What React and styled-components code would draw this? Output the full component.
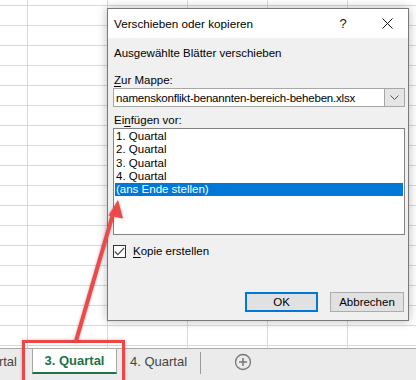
import React from "react";
import styled, { createGlobalStyle } from "styled-components";

const GlobalStyle = createGlobalStyle`
  html, body { margin: 0; padding: 0; background: #fff; }
  body { font-family: "Liberation Sans", Arial, sans-serif; }
  * { box-sizing: border-box; }
`;

const Screen = styled.div`
  position: relative;
  width: 416px;
  height: 380px;
  overflow: hidden;
  display: flex;
  flex-direction: column;
  background: #fff;
`;

const Grid = styled.div`
  flex: 1;
  background-color: #fff;
  background-image:
    linear-gradient(to right, #d9d9d9 1px, transparent 1px),
    linear-gradient(to bottom, #d9d9d9 1px, transparent 1px);
  background-size: 80px 20px;
  background-position: 27px 5px;
`;

const TabBar = styled.div`
  height: 32px;
  flex: none;
  border-top: 1px solid #ababab;
  background: #ebebeb;
  display: flex;
  align-items: flex-start;
  font-size: 13px;
  color: #444;
`;

const CutTab = styled.div`
  width: 32px;
  height: 25px;
  overflow: hidden;
  display: flex;
  justify-content: flex-end;
  align-items: center;
  padding-right: 15px;
  white-space: nowrap;
`;

const ActiveTab = styled.div`
  width: 85px;
  height: 25px;
  background: #fff;
  border-left: 1px solid #a8a8a8;
  border-right: 1px solid #a8a8a8;
  border-bottom: 2px solid #217346;
  display: flex;
  justify-content: center;
  align-items: center;
  font-weight: bold;
  color: #217346;
  white-space: nowrap;
`;

const Tab = styled.div`
  height: 25px;
  padding: 0 13px;
  display: flex;
  align-items: center;
  white-space: nowrap;
`;

const TabSeparator = styled.div`
  width: 1px;
  height: 22px;
  margin-top: 3px;
  background: #9a9a9a;
`;

const AddSheet = styled.div`
  margin-left: 33px;
  height: 25px;
  display: flex;
  align-items: center;
`;

const Dialog = styled.div`
  position: absolute;
  left: 107px;
  top: 8px;
  width: 302px;
  height: 313px;
  border: 1px solid #7a7a7a;
  background: #f0f0f0;
  box-shadow: 0 0 9px rgba(0, 0, 0, 0.28);
  display: flex;
  flex-direction: column;
  font-size: 11.5px;
  color: #000;
`;

const TitleBar = styled.div`
  height: 29px;
  flex: none;
  background: #fff;
  display: flex;
  align-items: center;
`;

const Title = styled.div`
  flex: 1;
  padding-left: 6px;
  font-size: 11.7px;
`;

const TitleButton = styled.div`
  width: ${(p) => p.$w}px;
  height: 29px;
  display: flex;
  align-items: center;
  justify-content: center;
  font-size: 13px;
  color: #111;
`;

const Body = styled.div`
  flex: 1;
  display: flex;
  flex-direction: column;
  padding: 0 3px 0 5px;
`;

const Label = styled.div`
  line-height: 16px;
  padding-left: 1px;
  margin-top: ${(p) => p.$mt}px;
  white-space: nowrap;
`;

const Key = styled.span`
  text-decoration: underline;
  text-underline-offset: 2px;
`;

const Combo = styled.div`
  height: 19px;
  display: flex;
  border: 1px solid #a6a6a6;
  background: #fff;
`;

const ComboText = styled.div`
  flex: 1;
  display: flex;
  align-items: center;
  padding-left: 2px;
  letter-spacing: -0.2px;
  white-space: nowrap;
  overflow: hidden;
`;

const ComboButton = styled.div`
  width: 20px;
  border-left: 1px solid #a6a6a6;
  background: #e5e5e5;
  display: flex;
  align-items: center;
  justify-content: center;
`;

const ListBox = styled.div`
  height: 107px;
  border: 1px solid #828282;
  background: #fff;
  padding: 1px;
`;

const ListItem = styled.div`
  height: 13.3px;
  line-height: 13.3px;
  padding-left: 1px;
  white-space: nowrap;
  background: ${(p) => (p.$selected ? "#0078d7" : "transparent")};
  color: ${(p) => (p.$selected ? "#fff" : "#000")};
`;

const CheckRow = styled.div`
  margin-top: 8px;
  height: 16px;
  display: flex;
  align-items: center;
  gap: 7px;
`;

const CheckBox = styled.div`
  width: 13px;
  height: 13px;
  border: 1px solid #333;
  background: #fff;
  display: flex;
  align-items: center;
  justify-content: center;
`;

const ButtonRow = styled.div`
  margin-top: 33px;
  display: flex;
  justify-content: flex-end;
  gap: 12px;
  padding-right: 1px;
`;

const Button = styled.div`
  width: ${(p) => p.$w}px;
  height: 20px;
  background: #e1e1e1;
  border: ${(p) => (p.$default ? "2px solid #0078d7" : "1px solid #adadad")};
  display: flex;
  align-items: center;
  justify-content: center;
`;

const RedBox = styled.div`
  position: absolute;
  left: 22px;
  top: 340px;
  width: 103px;
  height: 44px;
  border: 3px solid #ec4646;
  box-shadow: 0 0 3px rgba(0, 0, 0, 0.25);
`;

const ArrowSvg = styled.svg`
  position: absolute;
  left: 0;
  top: 0;
  overflow: visible;
  filter: drop-shadow(0 0 1.5px rgba(0, 0, 0, 0.3));
`;

export default function App() {
  return (
    <>
      <GlobalStyle />
      <Screen>
        <Grid />
        <TabBar>
          <CutTab>2. Quartal</CutTab>
          <ActiveTab>3. Quartal</ActiveTab>
          <Tab>4. Quartal</Tab>
          <TabSeparator />
          <AddSheet>
            <svg width="18" height="18" viewBox="0 0 18 18">
              <circle cx="9" cy="9" r="7.5" fill="none" stroke="#777" strokeWidth="1.3" />
              <path d="M9 5v8M5 9h8" stroke="#777" strokeWidth="1.5" />
            </svg>
          </AddSheet>
        </TabBar>

        <Dialog>
          <TitleBar>
            <Title>Verschieben oder kopieren</Title>
            <TitleButton $w={46}>?</TitleButton>
            <TitleButton $w={42}>
              <svg width="11" height="11" viewBox="0 0 11 11">
                <path d="M0.5 0.5L10.5 10.5M10.5 0.5L0.5 10.5" stroke="#111" strokeWidth="1" />
              </svg>
            </TitleButton>
          </TitleBar>
          <Body>
            <Label $mt={7}>Ausgewählte Blätter verschieben</Label>
            <Label $mt={11}>
              <Key>Z</Key>ur Mappe:
            </Label>
            <Combo>
              <ComboText>namenskonflikt-benannten-bereich-beheben.xlsx</ComboText>
              <ComboButton>
                <svg width="9" height="5" viewBox="0 0 9 5">
                  <path d="M0.5 0.5L4.5 4.5L8.5 0.5" fill="none" stroke="#555" strokeWidth="1" />
                </svg>
              </ComboButton>
            </Combo>
            <Label $mt={5}>
              Ei<Key>n</Key>fügen vor:
            </Label>
            <ListBox>
              <ListItem>1. Quartal</ListItem>
              <ListItem>2. Quartal</ListItem>
              <ListItem>3. Quartal</ListItem>
              <ListItem>4. Quartal</ListItem>
              <ListItem $selected>(ans Ende stellen)</ListItem>
            </ListBox>
            <CheckRow>
              <CheckBox>
                <svg width="11" height="9" viewBox="0 0 11 9">
                  <path d="M0.8 4.5L3.8 7.6L10.2 0.8" fill="none" stroke="#444" strokeWidth="1.2" />
                </svg>
              </CheckBox>
              <span>
                <Key>K</Key>opie erstellen
              </span>
            </CheckRow>
            <ButtonRow>
              <Button $w={73} $default>OK</Button>
              <Button $w={74}>Abbrechen</Button>
            </ButtonRow>
          </Body>
        </Dialog>

        <RedBox />
        <ArrowSvg width="416" height="380" viewBox="0 0 416 380">
          <path d="M76 341L113 214" stroke="#ef4848" strokeWidth="4" strokeLinecap="round" />
          <path d="M118 200L108.5 215.5L123 218.5Z" fill="#ef4848" />
        </ArrowSvg>
      </Screen>
    </>
  );
}
